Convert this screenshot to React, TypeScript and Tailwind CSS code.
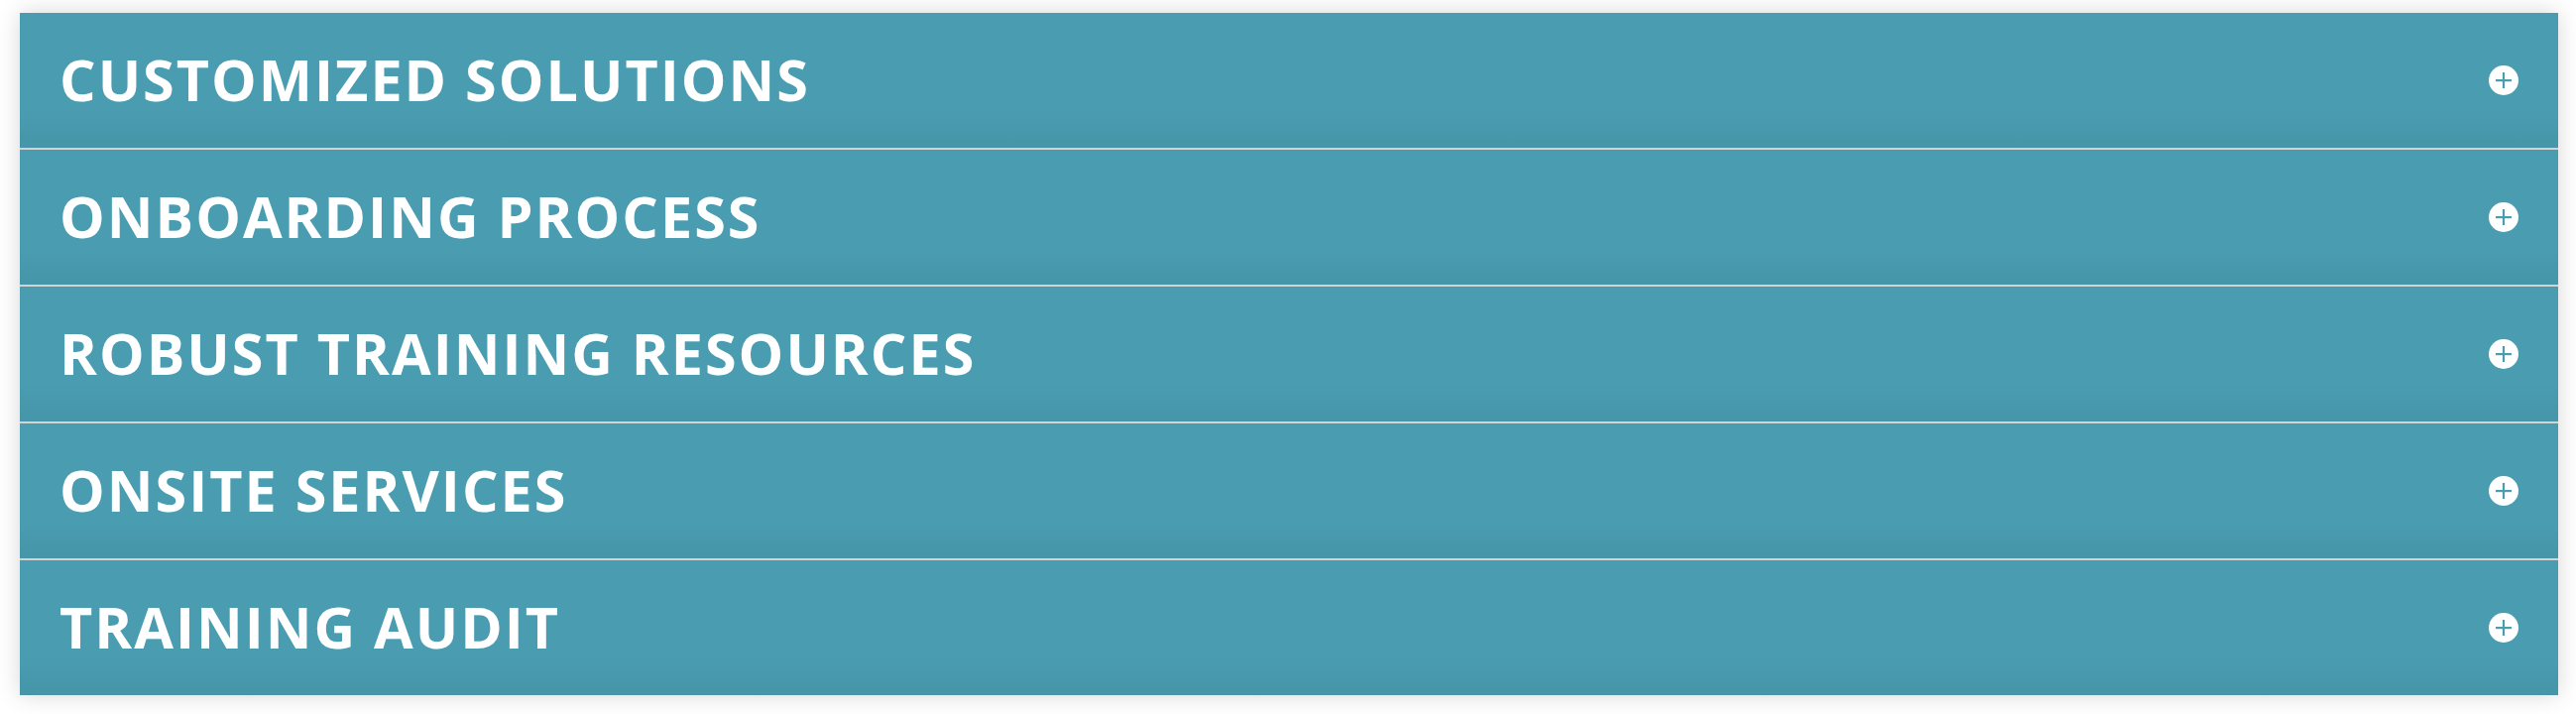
import { useState } from "react"

const sections = [
  "Customized Solutions",
  "Onboarding Process",
  "Robust Training Resources",
  "Onsite Services",
  "Training Audit",
]

function PlusCircle() {
  return (
    <svg width="30" height="30" viewBox="0 0 30 30" aria-hidden="true">
      <circle cx="15" cy="15" r="15" fill="#ffffff" />
      <rect x="7" y="14" width="16" height="2.2" fill="#4a9db1" />
      <rect x="13.9" y="7" width="2.2" height="16" fill="#4a9db1" />
    </svg>
  )
}

export default function App() {
  const [open, setOpen] = useState<number | null>(null)

  return (
    <div className="min-h-[720px] bg-white pt-[13px] pl-[20px]">
      <div className="w-[2560px] flex flex-col bg-[#d3d3d3] gap-[2px] shadow-[0_0_22px_rgba(0,0,0,0.16)]">
        {sections.map((title, i) => (
          <button
            key={title}
            type="button"
            onClick={() => setOpen(open === i ? null : i)}
            className="h-[136px] flex items-center justify-between pl-[40px] pr-[40px] bg-gradient-to-b from-[#4a9db1] via-[#4a9db1] via-70% to-[#4695a9] text-left"
          >
            <span
              className="text-white font-bold uppercase text-[57.5px] leading-none tracking-[2px]"
              style={{ fontFamily: '"Open Sans", "Liberation Sans", sans-serif' }}
            >
              {title}
            </span>
            <PlusCircle />
          </button>
        ))}
      </div>
    </div>
  )
}
